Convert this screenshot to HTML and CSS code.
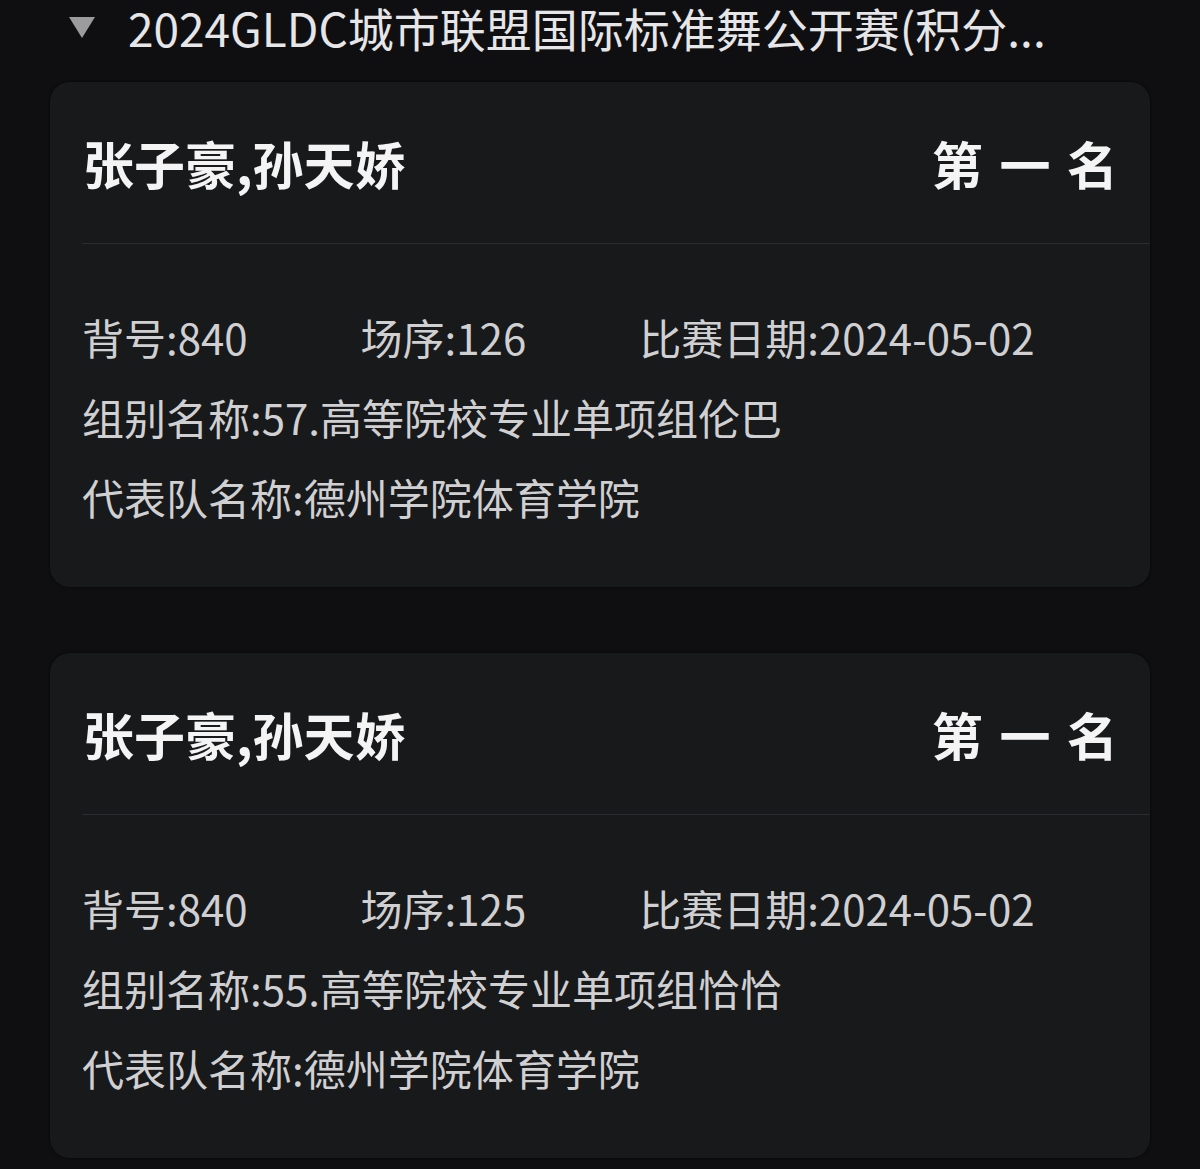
FILE: index.html
```html
<!DOCTYPE html>
<html>
  <head>
    <meta charset="UTF-8" />
    <title>比赛成绩</title>
    <link rel="stylesheet" href="styles.css">
  </head>
  <body>
    <div class="group-head">
      <svg class="arrow" width="28" height="24" viewBox="0 0 28 24">
        <polygon points="1,2 27,2 14,23" fill="#9b9b9d" />
      </svg>
      <div class="group-title">2024GLDC城市联盟国际标准舞公开赛(积分...</div>
    </div>

    <div class="card">
      <div class="card-head">
        <div class="name">张子豪,孙天娇</div>
        <div class="rank">第 一 名</div>
      </div>
      <div class="card-body">
        <div class="row">
          <span class="item">背号:840</span>
          <span class="item">场序:126</span>
          <span class="item">比赛日期:2024-05-02</span>
        </div>
        <div class="row">组别名称:57.高等院校专业单项组伦巴</div>
        <div class="row">代表队名称:德州学院体育学院</div>
      </div>
    </div>

    <div class="card">
      <div class="card-head">
        <div class="name">张子豪,孙天娇</div>
        <div class="rank">第 一 名</div>
      </div>
      <div class="card-body">
        <div class="row">
          <span class="item">背号:840</span>
          <span class="item">场序:125</span>
          <span class="item">比赛日期:2024-05-02</span>
        </div>
        <div class="row">组别名称:55.高等院校专业单项组恰恰</div>
        <div class="row">代表队名称:德州学院体育学院</div>
      </div>
    </div>
  </body>
</html>
```

FILE: styles.css
```css
body {
  margin: 0;
  background-color: #0f0f11;
  font-family: "Noto Sans CJK SC", "Noto Sans", sans-serif;
  color: #d0d0d2;
}

.group-head {
  display: flex;
  align-items: center;
  height: 54px;
  padding-left: 68px;
  margin-bottom: 28px;
}

.arrow {
  flex: none;
  margin-right: 32px;
}

.group-title {
  font-size: 46px;
  line-height: 54px;
  color: #e6e6e8;
  white-space: nowrap;
}

.card {
  margin: 0 50px 66px 50px;
  background-color: #18191b;
  border-radius: 20px;
  box-shadow: 0 0 3px rgba(0, 0, 0, 0.6);
}

.card-head {
  display: flex;
  justify-content: space-between;
  align-items: center;
  height: 161px;
  margin-left: 32px;
  padding: 0 32px 0 1px;
  border-bottom: 1px solid #2b2c2f;
}

.name,
.rank {
  font-size: 51px;
  font-weight: bold;
  color: #f4f4f5;
}

.rank {
  word-spacing: 5px;
}

.card-body {
  padding: 53px 34px 50px 32px;
}

.row {
  display: flex;
  gap: 113px;
  font-size: 42px;
  line-height: 80px;
  white-space: nowrap;
}
```
